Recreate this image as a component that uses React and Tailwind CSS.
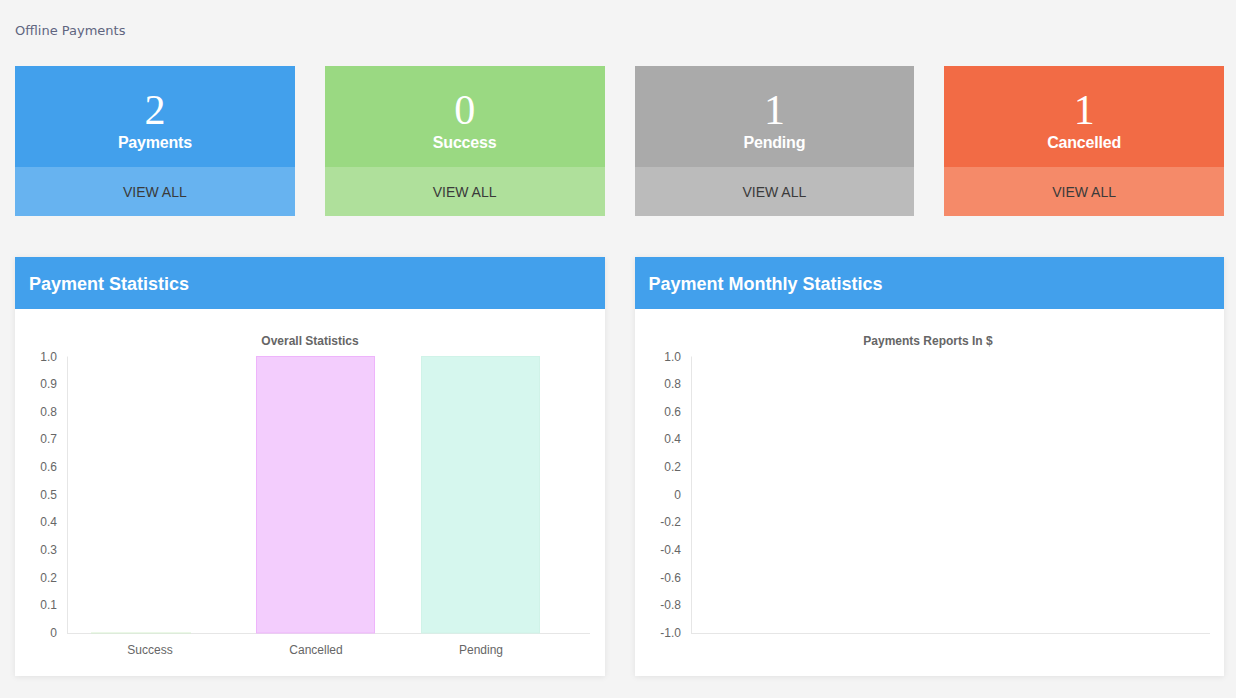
import React from 'react';

const cards = [
  { value: 2, label: 'Payments', top: 'bg-[#42a0ec]', bottom: 'bg-[#67b3f0]' },
  { value: 0, label: 'Success', top: 'bg-[#9ad982]', bottom: 'bg-[#afe09b]' },
  { value: 1, label: 'Pending', top: 'bg-[#aaaaaa]', bottom: 'bg-[#bbbbbb]' },
  { value: 1, label: 'Cancelled', top: 'bg-[#f26b45]', bottom: 'bg-[#f58a69]' },
];

const StatCard = ({ value, label, top, bottom }) => (
  <div className="flex flex-col">
    <div className={`${top} h-[101px] flex flex-col items-center justify-center text-white`}>
      <div className="font-['Liberation_Serif',serif] text-[42px] leading-[42px] mt-[8px]">{value}</div>
      <div className="font-['Liberation_Sans',sans-serif] font-bold text-[16px] leading-[20px] mt-[2px] tracking-[-0.2px]">{label}</div>
    </div>
    <div className={`${bottom} h-[49px] flex items-center justify-center text-[#3a3a3a] text-[14px] font-['Liberation_Sans',sans-serif] pt-[1px]`}>
      VIEW ALL
    </div>
  </div>
);

const Panel = ({ title, children }) => (
  <div className="bg-white shadow-[0_1px_6px_rgba(0,0,0,0.08)] flex flex-col">
    <div className="bg-[#42a0ec] h-[52px] flex items-center px-[14px] pt-[2px]">
      <h2 className="text-white font-bold text-[18px] font-['Liberation_Sans',sans-serif]">{title}</h2>
    </div>
    <div className="h-[367px]">{children}</div>
  </div>
);

const font = "'Liberation Sans', Arial, sans-serif";

const OverallChart = () => {
  const ticks = [1.0, 0.9, 0.8, 0.7, 0.6, 0.5, 0.4, 0.3, 0.2, 0.1, 0];
  const top = 47.5;
  const bottom = 324;
  const step = (bottom - top) / 10;
  return (
    <svg width="590" height="367" fontFamily={font}>
      <text x="295" y="36" textAnchor="middle" fontSize="12" fontWeight="bold" fill="#666">Overall Statistics</text>
      {ticks.map((t, i) => (
        <text key={i} x="42" y={top + i * step + 4} textAnchor="end" fontSize="12" fill="#666">
          {t === 0 ? '0' : t.toFixed(1)}
        </text>
      ))}
      <line x1="52.5" y1={top} x2="52.5" y2={bottom} stroke="#e6e6e6" />
      <line x1="52" y1={bottom + 0.5} x2="575" y2={bottom + 0.5} stroke="#e6e6e6" />
      <line x1="76" y1={bottom} x2="176" y2={bottom} stroke="#d6f0cf" />
      <rect x="241.5" y={top} width="118" height={bottom - top} fill="#f3cdfd" stroke="#eeb4fb" />
      <rect x="406.5" y={top} width="118" height={bottom - top} fill="#d6f7ee" stroke="#d0f3e8" />
      <text x="135" y="345" textAnchor="middle" fontSize="12" fill="#666">Success</text>
      <text x="301" y="345" textAnchor="middle" fontSize="12" fill="#666">Cancelled</text>
      <text x="466" y="345" textAnchor="middle" fontSize="12" fill="#666">Pending</text>
    </svg>
  );
};

const MonthlyChart = () => {
  const ticks = ['1.0', '0.8', '0.6', '0.4', '0.2', '0', '-0.2', '-0.4', '-0.6', '-0.8', '-1.0'];
  const top = 47.5;
  const bottom = 324;
  const step = (bottom - top) / 10;
  return (
    <svg width="589" height="367" fontFamily={font}>
      <text x="293" y="36" textAnchor="middle" fontSize="12" fontWeight="bold" fill="#666">Payments Reports In $</text>
      {ticks.map((t, i) => (
        <text key={i} x="46" y={top + i * step + 4} textAnchor="end" fontSize="12" fill="#666">{t}</text>
      ))}
      <line x1="56.5" y1={top} x2="56.5" y2={bottom} stroke="#e6e6e6" />
      <line x1="56" y1={bottom + 0.5} x2="575" y2={bottom + 0.5} stroke="#e6e6e6" />
    </svg>
  );
};

export default function App() {
  return (
    <div className="min-h-screen bg-[#f4f4f4] pl-[15px] pr-[12px] pt-[23px] pb-[20px]">
      <h1 className="text-[13px] text-[#5f6580] font-['DejaVu_Sans',sans-serif] leading-[16px]">Offline Payments</h1>
      <div className="grid grid-cols-4 gap-[30px] mt-[27px]">
        {cards.map((c) => (
          <StatCard key={c.label} {...c} />
        ))}
      </div>
      <div className="grid grid-cols-2 gap-[30px] mt-[41px]">
        <Panel title="Payment Statistics">
          <OverallChart />
        </Panel>
        <Panel title="Payment Monthly Statistics">
          <MonthlyChart />
        </Panel>
      </div>
    </div>
  );
}
